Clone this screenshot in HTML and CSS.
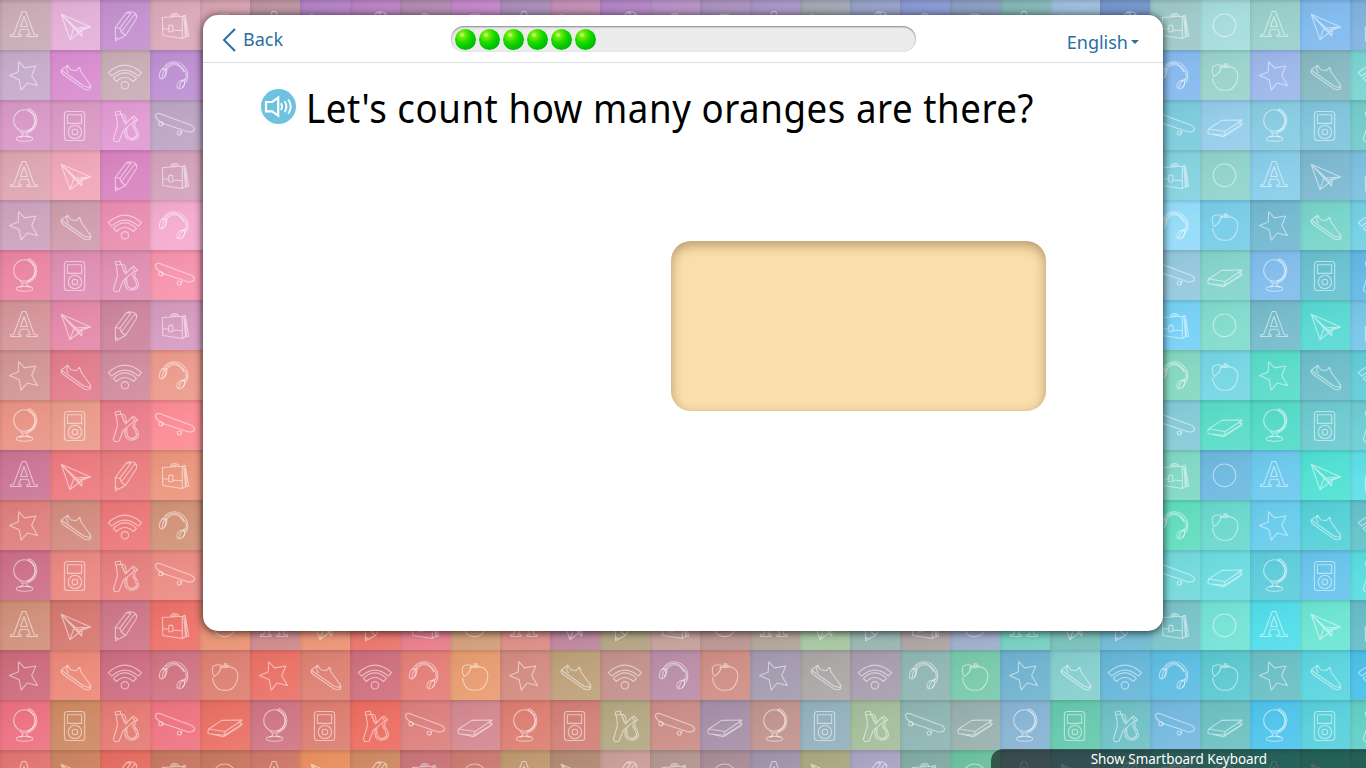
FILE: index.html
```html
<!DOCTYPE html>
<html lang="en">
<head>
<meta charset="utf-8">
<title>Count the oranges</title>
<link rel="stylesheet" href="styles.css">
</head>
<body>
<svg class="symbols" aria-hidden="true">
  <symbol id="i0" viewBox="0 0 50 50"><path d="M22.2 11.5h3.6L34.3 34.7h3v1.8H27v-1.8h3l-2-5.5h-7.5l-2 5.5h2.5v1.8H10.5v-1.8h3zM24 16.5L20.6 26.5h6.8z"/></symbol>
  <symbol id="i1" viewBox="0 0 50 50"><path d="M11.2 14.3L40.7 27l-9 3.2L27.5 34 20 39.6zM11.2 14.3L24 28l16.7-1M24 28l-4 11.6M11.2 14.3L28 30l3.7 6 .3-6M24 28l7.7 8M28 30l12.7-3"/></symbol>
  <symbol id="i2" viewBox="0 0 50 50"><path d="M15.3 27.5L26.5 12.6l3-.9 5 .8 2.3 2.7-.5 3.5L25.5 35.5l-10 5.3zM15.3 27.5l4.5.8 1.5 3.7 4.2 3.5M19.8 28.3L31 13.2M21.3 32L34.3 14.5l2.5.7M26.5 12.6l4.5.6M15.4 37l2.7 2.3"/></symbol>
  <symbol id="i3" viewBox="0 0 50 50"><path d="M12.4 17.5L32.3 16.2v22.3L12.8 35.5zM32.3 16.2l2.8-1L38.6 36.2l-3.2.6-3.1 1.7M33.8 16l1.8 20.8M35.2 18l1.3 18.4M12.4 28.5l6.3.8M22.8 30l9.5.7M18.8 25.8q2.3-1.3 4 0v6h-4zM20.3 17q1-3.4 4.2-3.4t4.6 2.7M22 16.8q2-2.4 4.8-.3"/></symbol>
  <symbol id="i4" viewBox="0 0 50 50"><circle cx="24.5" cy="25.3" r="11.3"/></symbol>
  <symbol id="i5" viewBox="0 0 50 50"><path d="M18.7 11.7l5.8 6.2 11.3-1.9-4.1 9.5 5.8 10-10.3-2.5-6 7.2-2-10.4-9.7-4.2L18.2 22z"/></symbol>
  <symbol id="i6" viewBox="0 0 50 50"><path d="M17.8 15.2L11.3 20q-.8 2.5 2 4.5l20.9 14.6q4.5 1.6 6.3-.4.8-3.7-1.2-5.2L31 22l-1.3-4.8-3.4 3.5-5.8-.9zM11.3 20L33.8 36q3.8 1.5 6.8 1M17.8 15.2l-1.3 4.5 2 3.3"/></symbol>
  <symbol id="i7" viewBox="0 0 50 50"><path d="M8.3 22.7Q24.8 7.5 41.5 22.7l-3.1 3.5Q24.8 14 11.7 26.2zM13.3 28.3Q24.8 17.5 36.5 28.3l-3.2 3.2Q24.8 23.5 16.5 31.5z"/><circle cx="24.9" cy="35.3" r="3.7"/></symbol>
  <symbol id="i8" viewBox="0 0 50 50"><path d="M12.5 20Q16 11.8 24.5 11.7T37.5 22Q38.5 28 36 32.5M15.5 17.5Q19 13.2 24.5 13.2T35.8 22.5Q37 27 35.3 30M17 19Q20 14.5 25 14.8T34 22"/><ellipse cx="12.6" cy="23.8" rx="2.8" ry="5.3" transform="rotate(18 12.6 23.8)"/><path d="M12 28.5Q12.5 21 16.7 18q.8 5-2.4 9.5"/><ellipse cx="30.8" cy="34.5" rx="3.2" ry="4.7" transform="rotate(38 30.8 34.5)"/><path d="M29 38q1-6 5.5-9 1.5 5-2.5 9"/></symbol>
  <symbol id="i9" viewBox="0 0 50 50"><path d="M19.5 18C22 17 23.5 17 25.5 17.8C30 15.5 37.8 18 37.8 26C37.8 33 33 40 28 40C26 40.3 23.5 40.3 21.5 40C16 39.5 12.3 32 12.6 27.5M14.3 26.5C11 22 11.8 15.5 15.5 15.2Q18 14.4 21 15.3Q21.5 22 14.3 26.5zM24.8 17.5l-.7-3.7h2.6l.3 3.5M20.5 16.8l5-1.4 3.4.5-.2 1.5"/></symbol>
  <symbol id="i10" viewBox="0 0 50 50"><circle cx="24.5" cy="20.5" r="10.8"/><path d="M27.5 9.7l2.1-1q7.5 4.3 7.2 12.6Q36 30.5 27 33h-5.5l-1.3-2M28.5 10.6q6.7 4 6.6 11Q34.5 29 27 31.5M22.7 33v2.5l-3.3 1.6M26.7 33v2.5l3.5 1.6"/><ellipse cx="24.5" cy="38.8" rx="8.3" ry="2.4"/></symbol>
  <symbol id="i11" viewBox="0 0 50 50"><rect x="14.4" y="11.5" width="20.3" height="29" rx="3"/><rect x="17.4" y="14.7" width="14.2" height="8.7"/><circle cx="24.9" cy="32" r="6.7"/><circle cx="24.9" cy="32" r="2.8"/></symbol>
  <symbol id="i12" viewBox="0 0 50 50"><path d="M15.3 12l5-1 .5 3.2-5.2 1zM16.3 15.2l1.2 10.3-4.2 14 1.7 2.2 4-.4 4.3-11 11.5-9.6-3-3.4-6.3 6.7-2.5-6-1.7-3.5M31.8 17.3l2.2-1 3.5 3.7-2.7 2M21 14q5 .5 4.8 5l.8 4.5M21.5 16q2.5 3.5 2.5 6M25.5 28q-2.5 10.5 4.8 12.3 8.5-.7 8.2-6-.6-4-3.8-7.3l.3-5M27 27q-1.5 10.5 4 11.6 6-.8 5.5-4.6-1-3.8-3.4-6.5l-.3-4"/></symbol>
  <symbol id="i13" viewBox="0 0 50 50"><path d="M5.5 15q1.6-3 6.7-.5L37 23.8q8 2.2 7.5 6-1.2 3-7.5 1.8L14.5 24Q5 20 5.5 15z"/><circle cx="10.8" cy="23.7" r="2"/><circle cx="29.3" cy="33" r="2"/><path d="M13.8 23.7l-1.5 1.5M32 31l-1 2.5"/></symbol>
  <symbol id="i14" viewBox="0 0 50 50"><path d="M8.7 29l13-8.6 20.5-.4-17 11.5zM8.7 29q-1.6 2.8 0 4.7l15.8 1.5 18-11.3-3-1.3M25.2 31.5q-1.8 1.7-.7 3.7M9.5 33.7l14 3 18.3-11.7M42.2 20l-2.8 2.5.8 1.5"/></symbol>
</svg>

<div class="mosaic" id="mosaic" aria-hidden="true"></div>

<main class="panel">
  <header class="topbar">
    <a class="back"><svg class="chevron" viewBox="0 0 14 24"><path d="M13 1L2 12l11 11"/></svg>Back</a>
    <div class="progress"><i class="ball"></i><i class="ball"></i><i class="ball"></i><i class="ball"></i><i class="ball"></i><i class="ball"></i></div>
    <a class="language">English<i class="caret"></i></a>
  </header>
  <section class="question">
    <svg class="speaker" viewBox="0 0 35 35"><circle cx="17.5" cy="17.5" r="17.5"/><path d="M5 13h6.2l6-4.3v18l-6-4.4H5z"/><path class="waves" d="M20 14.3q2.1 3.3 0 6.6M23.6 12.2q3.6 5.4 0 10.8M27.2 10.5q5 7.1 0 14.2"/></svg>
    <h1 class="prompt">Let's count how many oranges are there?</h1>
  </section>
  <div class="drop-area"></div>
</main>
<div class="keyboard-toggle"><span class="keyboard-label">Show Smartboard Keyboard</span></div>
<script src="tiles.js"></script>
</body>
</html>
```

FILE: styles.css
```css
* { box-sizing: border-box; }
body {
  margin: 0;
  width: 1366px;
  height: 768px;
  overflow: hidden;
  font-family: "Noto Sans", "Open Sans", sans-serif;
  padding-top: 15px;
}
.symbols { position: absolute; width: 0; height: 0; }

.mosaic {
  position: absolute;
  z-index: -1;
  top: 0;
  left: 0;
  display: grid;
  grid-template-columns: repeat(28, 50px);
  grid-auto-rows: 50px;
  height: 768px;
  width: 1366px;
  overflow: hidden;
}
.tile {
  background-image:
    linear-gradient(rgba(0,0,0,.11), rgba(0,0,0,0)),
    linear-gradient(90deg, rgba(0,0,0,.06), rgba(0,0,0,0) 4px),
    linear-gradient(160deg, rgba(0,0,0,.035), rgba(255,255,255,.04) 50%, rgba(255,255,255,.09));
  background-size: 50px 4px, auto, auto;
  background-repeat: no-repeat;
}
.tile svg {
  display: block;
  width: 50px;
  height: 50px;
  fill: none;
  stroke: rgba(255,255,255,.52);
  stroke-width: 1.1;
  stroke-linejoin: round;
}

.panel {
  width: 960px;
  height: 616px;
  margin: 0 auto;
  background: #fff;
  border-radius: 15px;
  box-shadow: 0 1px 8px rgba(0,0,0,.8);
}
.topbar {
  height: 48px;
  border-bottom: 1px solid #ddd;
  display: grid;
  grid-template-columns: 229px 465px 1fr;
  padding: 0 24px 0 19px;
  color: #2a6fa3;
  font-size: 18px;
  line-height: 24px;
}
.back { display: flex; align-items: center; height: 24px; margin-top: 12px; gap: 7px; }
.chevron { width: 14px; height: 24px; fill: none; stroke: #2a6fa3; stroke-width: 2; margin-top: 1px; }
.progress {
  height: 26px;
  margin-top: 11px;
  padding: 3px 4px;
  display: flex;
  gap: 4px;
  border-radius: 13px;
  background: #ececec;
  box-shadow: inset 0 1px 2px rgba(0,0,0,.45);
}
.ball {
  width: 21px;
  height: 21px;
  margin-right: -1px;
  border-radius: 50%;
  background: radial-gradient(circle at 34% 28%, #d5ff8c 0, #72ee0c 14%, #23dc00 36%, #00c800 60%, #00aa00 90%);
}
.language { display: flex; align-items: center; justify-content: flex-end; height: 24px; margin-top: 15px; gap: 3px; }
.caret { border: 4px solid transparent; border-top-color: #2a6fa3; border-bottom: 0; }

.question { display: flex; height: 74px; padding: 26px 0 0 58px; gap: 10px; }
.speaker { width: 35px; height: 35px; fill: none; stroke: #fff; stroke-width: 2.2; flex: none; }
.speaker circle { fill: #6fc1e0; stroke: none; }
.speaker .waves { stroke-width: 1.9; }
.prompt {
  margin: -9px 0 0;
  height: 56px;
  font-size: 40px;
  line-height: 56px;
  font-weight: 400;
  color: #000;
  white-space: nowrap;
  letter-spacing: .6px;
  transform: scaleX(.916);
  transform-origin: left;
}
.drop-area {
  width: 375px;
  height: 170px;
  margin: 104px 0 0 468px;
  border-radius: 20px;
  background: #fadeab;
  box-shadow: inset 0 4px 12px rgba(70,45,0,.38);
}
.keyboard-toggle {
  display: flex;
  justify-content: center;
  width: 375px;
  height: 19px;
  margin: 118px 0 0 auto;
  border-top-left-radius: 12px;
  background: rgba(0,0,0,.55);
  color: #fff;
  font-size: 14px;
  line-height: 19px;
}
.keyboard-label {
  white-space: nowrap;
  transform: scaleX(.96);
}
```

FILE: tiles.js
```js
// Full rows list every column; short rows list the four left and five right columns.
const rows = [
  "c9abb4 e4b0d8 c48fcf dba8b8 d8a4b3 be96a2 b583c7 bd82c6 b38cb2 c588ca ab8fbb c590b8 b486c8 b893c8 ad93c0 ab97c8 a3aab6 97a3c8 8b9ad5 8c9fc3 84b8b8 9fc0df 7697ce 9dc8c8 a5dcdc 97cfcb 7fbaee 7fb2e0",
  "c6abcb d98ccf c9acb5 bd8fd2 84b8ee 98d2cc 9bb6ea 85b8c1 79d4d2",
  "d997c7 d998c3 e19ad2 bda5c4 79cadc 93cdea 86cbe2 7fc4db 73cbcb",
  "dea5b0 f0a6b7 d983c0 d3a1ba 82d1df 8fd3cc 87cdea 7bb8cf 7cbfe0",
  "cda2bd cf9cac ea8db0 f3abcf 93dbf8 77cce8 72b8d0 77d4ca 72cfe4",
  "ea84a2 de8cb2 df8db1 f793ac 93c8dd 83d4cb 7fbcec 67c0d0 62b8e6",
  "d49499 e488a8 cd839d d69abf 74d0f6 80dbcd 74bacb 57d9d2 77c6ea",
  "d29593 e27b8c d08a9d ec9a8b 82d7c0 74d6e4 58dbc9 6cbdc9 62cbd9",
  "e99384 e99a89 e87d89 fc8b94 83cad6 58dcc8 52dac8 6bc9cf 6bcdd3",
  "ca7594 ec797e e97b7d ec957d 7fd8c4 6cb8e0 6bc8ee 4fe0d3 5fdfe8",
  "de7f7e d28a7e ec7777 d19277 5fdcbf 69d8ce 67ccec 54d0d8 63c3c9",
  "cc6e87 e98680 e67d7d ec8b83 72d8da 6bdcdf 5dccdb 66c4ec 59dce0",
  "d08f79 d5776f ce7586 ec7068 e89070 cc8588 ea9070 e87065 e87888 d09a74 d98980 bb829a b0a07f c29d96 b8918d b0a095 a3c49f 93b2ad a99f9f 9aaac9 70cdbd 74bdb8 6bb8d2 77c2c8 73e2d5 50ddea 6be5d3 66bdc8",
  "cc6a7a ec8878 cd6c80 d07280 dd7f70 ea7065 dd8072 cf6e7c e47d76 e89b6f d38a7f bda079 c29089 b98ca8 cf8d84 a39aaf aaa6a6 a69cae 8fb5b2 78c9ab 6fb2cf 84cfce 65b6d8 5cbce2 5ac8d0 69bfc5 5ad4df 4ac0e8",
  "ec7080 cd8862 e47a72 ee7380 ea6f63 cf7482 dc7c70 ec6c60 dc7f7d d4878f dc7d70 d27e75 b3a781 cb8c86 a58fa8 c0938d 92b0bd a4bd9a 8db5b2 97b0ad 86b3d3 64c8ac 6dc0c5 73b8df 6cc0c2 4ec4ec 57d0dc 62cfc7",
  "e27570 cc8360 e66c60 c87860 c8775f cf7868 ea9060 cf8a63 ca7377 cc7a70 c0996f b38a73 cc9f99 b3968f a88b96 9f94ab a9a87f a9a5c4 81aba4 6cc2a0 80a8b0 70b0b8 60b8b8 60c8c0 55d0c0 50d8c8 50d8c0 50d8c0"
];
let html = "";
rows.forEach((row, r) => {
  let colors = row.split(" ");
  if (colors.length === 9) {
    const left = colors.slice(0, 4), right = colors.slice(4);
    colors = left.concat(Array(19).fill(left[3]), right);
  }
  colors.forEach((color, c) => {
    const icon = (r % 3) * 5 + (c % 5);
    html += `<div class="tile" style="background-color:#${color}"><svg><use href="#i${icon}"/></svg></div>`;
  });
});
document.getElementById("mosaic").innerHTML = html;
```
